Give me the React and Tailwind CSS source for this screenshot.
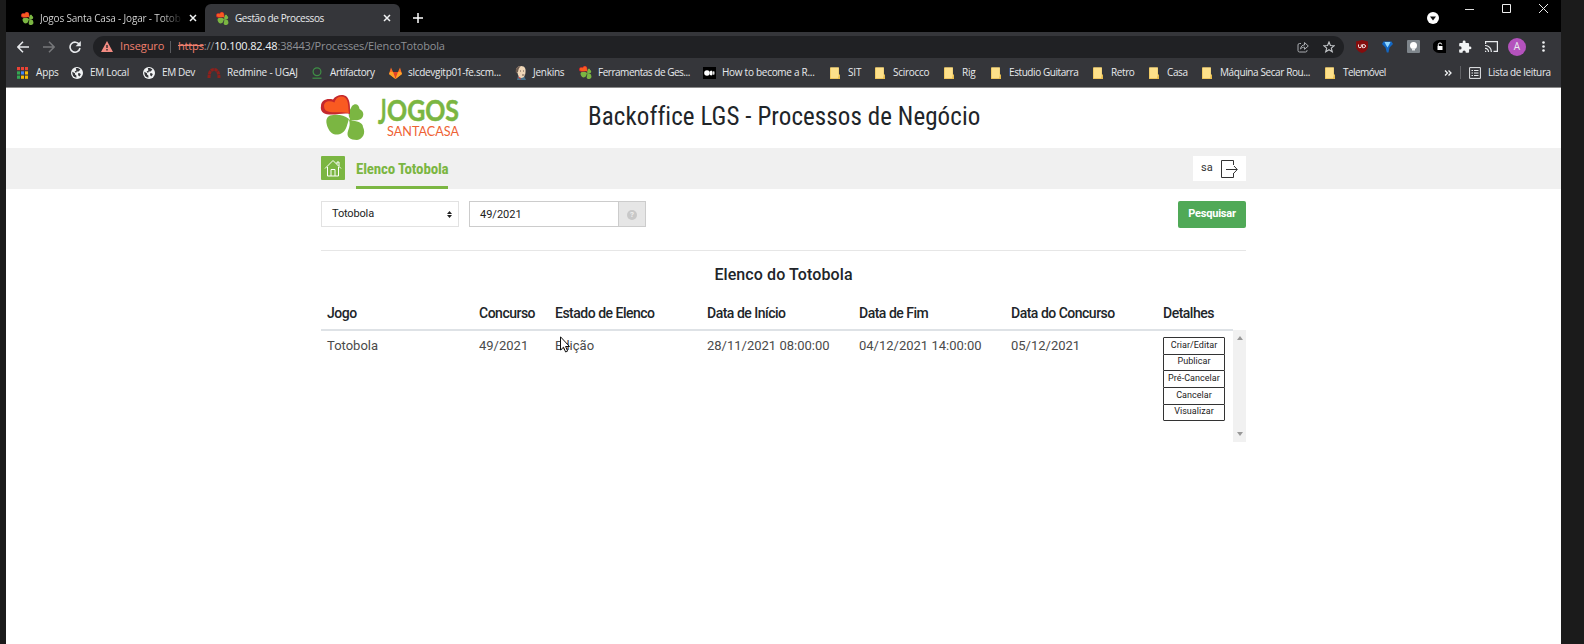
import React from 'react';

const Clover = ({ className }) => (
  <svg viewBox="0 0 45 45" className={className}>
    <path d="M28 24C22 19 15 19 9 20.500C4 23 5 28 7 33C10 40 16 41 21 38C26 35 26 29 28 24Z" fill="#7bb642" />
    <path d="M29 24C26 18 29 15 31 11C34 8 38 9 38.500 14C43 16 43.500 21 40 24C36 26 32 25 30 25.500C35 26 42 27 42 32C45 38 42 44 36 45C29 45 25 42 27 36C29 31 29 28 28 25Z" fill="#7bb642" />
    <path d="M0 11C0 5 6 3 12 4.500C15 0 22 -1.500 26 2C29.500 6 29 13 29 19C23 17.500 16 20 8 19.500C2 19 -1 16 0 11Z" fill="#c4282d" />
    <path d="M3 11C3 6.500 8 5 13.500 7.500C15 2 20.500 0 24.500 3C28 7 27 13 28 18C21 16.500 15 17.500 9 17C5 16.500 3 14.500 3 11Z" fill="#f95a21" />
  </svg>
);

const Globe = () => (
  <svg viewBox="0 0 12 12" className="size-3">
    <circle cx="6" cy="6" r="6" fill="#f1f3f4" />
    <path d="M1.300 4.800L4 6.300V7.600L5.400 8.600V10.800C2.600 10.400 1 8.200 1.300 4.800ZM4.800 1.200C6.800.8 8.400 1.600 9.400 2.600L7.600 4.600H5.800L5 6L3.600 4.600L5.400 3.600ZM7 6.200H9L9.800 7.600L8.300 9.600L7.200 8.200Z" fill="#35363a" />
  </svg>
);

const AppsGrid = () => (
  <svg viewBox="0 0 11 12" className="h-3 w-[11px]">
    {['#ea4335', '#ea4335', '#ea4335', '#34a853', '#4285f4', '#fbbc04', '#34a853', '#fbbc04', '#fbbc04'].map((c, i) => (
      <rect key={i} x={(i % 3) * 4} y={Math.floor(i / 3) * 4.3} width="3" height="3.2" fill={c} />
    ))}
  </svg>
);

const Redmine = () => (
  <svg viewBox="0 0 14 12" className="h-3 w-3.5" fill="none" stroke="#8f201c" strokeWidth="3">
    <path d="M2 11C2 5 4 2.500 7 2.500S12 5 12 11" strokeDasharray="3.200 .6" />
  </svg>
);

const Artifactory = () => (
  <svg viewBox="0 0 12 12" className="size-3" fill="none" stroke="#3f8f46" strokeWidth="1.200">
    <circle cx="6" cy="4.700" r="3.900" />
    <path d="M1.500 11.200H10.500" />
  </svg>
);

const Gitlab = () => (
  <svg viewBox="0 0 13 12" className="h-3 w-[13px]">
    <path d="M6.500 12L0 7L2 0.500L4 5H9L11 .5L13 7Z" fill="#fc6d26" />
    <path d="M6.500 12L4 5H9Z" fill="#e24329" />
    <path d="M6.500 12L0 7L1 5H4ZM6.500 12L13 7L12 5H9Z" fill="#fca326" />
  </svg>
);

const Jenkins = () => (
  <svg viewBox="0 0 12 14" className="h-3.5 w-3">
    <path d="M2 14L3 10H9L11 14Z" fill="#49728b" />
    <path d="M3 11L6 14L5 10Z" fill="#d33833" />
    <path d="M1 5C1 1 4 0 6 0C10 0 11 3 10.500 6C10.500 9 9 12 6.500 12C4 12 3 9 2.500 7Z" fill="#efd6b7" />
    <path d="M1 7C0 3 2 0 6 0C4 1.500 3.500 3 3 6ZM7 8.500H9.500V9.500H7ZM5 4.500H6V5.500H5ZM8 4.500H9V5.500H8Z" fill="#6d5b50" />
  </svg>
);

const Medium = () => (
  <svg viewBox="0 0 13 12" className="h-3 w-[13px]">
    <rect width="13" height="12" fill="#000" />
    <circle cx="4" cy="6" r="2.800" fill="#fff" />
    <ellipse cx="8.200" cy="6" rx="1.500" ry="2.500" fill="#fff" />
    <ellipse cx="10.800" cy="6" rx=".7" ry="2" fill="#fff" />
  </svg>
);

const Folder = () => (
  <svg viewBox="0 0 10 12" className="h-3 w-2.5">
    <path d="M0 .5H8.800V7.500H10V12H0Z" fill="#e8bd4e" />
    <path d="M.6 .5H8.800V8L8 11.200H.6Z" fill="#fde08a" />
  </svg>
);

const bookmarks = [
  ['Apps', AppsGrid, 'w-[54px]', 'gap-2', 'tracking-[-0.15px]'],
  ['EM Local', Globe, 'w-[72px]', 'gap-[7px]', 'tracking-[-0.3px]'],
  ['EM Dev', Globe, 'w-[64px]', 'gap-[7px]', 'tracking-[-0.35px]'],
  ['Redmine - UGAJ', Redmine, 'w-[104px]', 'gap-1.5', 'tracking-[-0.2px]'],
  ['Artifactory', Artifactory, 'w-[78px]', 'gap-[7px]', 'tracking-[-0.38px]'],
  ['slcdevgitp01-fe.scm...', Gitlab, 'w-[126px]', 'gap-1.5', 'tracking-[-0.3px]'],
  ['Jenkins', Jenkins, 'w-[64px]', 'gap-1.5', 'tracking-[-0.25px]'],
  ['Ferramentas de Ges...', () => <Clover className="size-[13px]" />, 'w-[124px]', 'gap-1.5', 'tracking-[-0.48px]'],
  ['How to become a R...', Medium, 'w-[127px]', 'gap-1.5', 'tracking-[-0.28px]'],
  ['SIT', Folder, 'w-[45px]', 'gap-2', 'tracking-[-0.2px]'],
  ['Scirocco', Folder, 'w-[69px]', 'gap-2', 'tracking-[-0.3px]'],
  ['Rig', Folder, 'w-[47px]', 'gap-2', 'tracking-[-0.2px]'],
  ['Estudio Guitarra', Folder, 'w-[102px]', 'gap-2', 'tracking-[-0.42px]'],
  ['Retro', Folder, 'w-[56px]', 'gap-2', 'tracking-[-0.4px]'],
  ['Casa', Folder, 'w-[53px]', 'gap-2', 'tracking-[-0.4px]'],
  ['Máquina Secar Rou...', Folder, 'w-[123px]', 'gap-2', 'tracking-[-0.4px]'],
  ['Telemóvel', Folder, 'w-[119px]', 'gap-2', 'tracking-[-0.55px]'],
];

const Cross = ({ className }) => (
  <svg viewBox="0 0 8 8" className={className} fill="none" stroke="#f1f3f4" strokeWidth="1.500">
    <path d="M1 1L7 7M7 1L1 7" />
  </svg>
);

function TabStrip() {
  return (
    <div className="flex h-8 bg-black text-[10px] text-[#e8eaed]">
      <div className="flex w-[199px] items-center pt-1 pl-[15px]">
        <Clover className="size-[13px]" />
        <div className="ml-1.5 w-[143px] whitespace-nowrap bg-linear-to-r from-[#dddddd] from-85% to-transparent bg-clip-text tracking-[-0.18px] text-transparent">Jogos Santa Casa - Jogar - Totob</div>
        <Cross className="ml-[6px] size-2" />
      </div>
      <div className="mt-1 flex w-[195px] items-center rounded-t-[6px] bg-[#35363a] pl-[11px]">
        <Clover className="size-[13px]" />
        <div className="ml-[6px] w-[143px] whitespace-nowrap tracking-[-0.4px]">Gestão de Processos</div>
        <Cross className="ml-[5px] size-2" />
      </div>
      <svg viewBox="0 0 10 10" className="mt-[13px] ml-[13px] size-2.5" stroke="#fff" strokeWidth="1.500"><path d="M5 0V10M0 5H10" /></svg>
      <div className="grow" />
      <svg viewBox="0 0 12 12" className="mt-3 mr-[26px] size-3"><circle cx="6" cy="6" r="6" fill="#fff" /><path d="M3 4.500H9L6 8.500Z" fill="#111" /></svg>
      <svg viewBox="0 0 9 9" className="mt-[5px] mr-[28px] size-[9px]" stroke="#ddd"><path d="M0 4.500H9" /></svg>
      <svg viewBox="0 0 9 9" className="mt-[4px] mr-[28px] size-[9px]" stroke="#eee" fill="none"><path d="M.5 .5H8.500V8.500H.5Z" /></svg>
      <svg viewBox="0 0 9 9" className="mt-[4px] mr-[13px] size-[9px]" stroke="#eee"><path d="M0 0L9 9M9 0L0 9" /></svg>
    </div>
  );
}

function Toolbar() {
  return (
    <div className="flex h-[26px] items-center pt-[3px] text-[#e8eaed]">
      <svg viewBox="0 0 12 12" className="ml-[11px] h-3 w-3" fill="none" stroke="#e8eaed" strokeWidth="1.500"><path d="M12 6H1M6 .8L.9 6L6 11.200" /></svg>
      <svg viewBox="0 0 12 12" className="ml-[14px] h-3 w-3" fill="none" stroke="#77787b" strokeWidth="1.500"><path d="M0 6H11M6 .8L11.100 6L6 11.200" /></svg>
      <svg viewBox="0 0 12 12" className="ml-[14px] size-3" fill="none" stroke="#e8eaed" strokeWidth="1.600"><path d="M10.300 3.500A5 5 0 1 0 11 7" /><path d="M11.800 0V5.200H6.600Z" fill="#e8eaed" stroke="none" /></svg>
      <div className="ml-[12px] flex h-[22px] w-[1251px] items-center rounded-full bg-[#202124] pl-2 text-[11px]">
        <svg viewBox="0 0 12 11" className="h-[11px] w-3"><path d="M6 0L12 11H0Z" fill="#f28b82" /><path d="M6 4V7M6 8V9.500" stroke="#202124" strokeWidth="1.300" /></svg>
        <span className="ml-[7px] w-[44px] whitespace-nowrap tracking-[-0.1px] text-[#f0806f]">Inseguro</span>
        <span className="ml-1.5 h-3 w-px bg-[#5a5b5f]" />
        <span className="ml-[7px] whitespace-nowrap tracking-[-0.17px] text-[#8d9094]">
          <span className="text-[#f0806f] line-through">https</span>://<span className="text-[#f1f3f4]">10.100.82.48</span>:38443/Processes/ElencoTotobola
        </span>
        <div className="grow" />
        <svg viewBox="0 0 12 12" className="size-3" fill="none" stroke="#aaadb1"><path d="M4 2.500H2.500Q1 2.500 1 4V9.500Q1 11 2.500 11H8.500Q10 11 10 9.500V9" /><path d="M3.500 8C4 5 5.500 4 7.500 4V1.500L11.300 5L7.500 8.300V6.200C6 6.200 4.800 6.500 3.500 8Z" /></svg>
        <svg viewBox="0 0 12 12" className="mr-[9px] ml-[14px] size-3" fill="none" stroke="#c4c7ca" strokeWidth="1.100"><path d="M6 1L7.400 4.500L11.200 4.700L8.300 7.100L9.300 10.800L6 8.700L2.700 10.800L3.700 7.100L.8 4.700L4.600 4.500Z" /></svg>
      </div>
      <svg viewBox="0 0 12 13" className="ml-[12px] h-[13px] w-3"><path d="M6 0L12 1.500V6C12 10 9 12 6 13C3 12 0 10 0 6V1.500Z" fill="#850d0d" /><path d="M2.500 4.500V6.500Q2.500 7.700 3.900 7.700T5.300 6.500V4.500M6.600 4.500V7.700H7.600Q9.600 7.500 9.600 6.100T7.600 4.500Z" stroke="#fff" strokeWidth=".9" fill="none" /></svg>
      <svg viewBox="0 0 11 12" className="ml-[14px] h-3 w-[11px]"><path d="M1.500 .5H9.500L11 3L7.500 6.500L6.500 11.500H4.800L3.500 6.500L0 3Z" fill="#1267c4" /><path d="M2.500 1H8.500L7 4L5.500 6.500L4 4Z" fill="#8fd6ff" /></svg>
      <svg viewBox="0 0 13 13" className="ml-[14px] size-[13px]"><rect width="13" height="13" rx="1" fill="#7e858b" /><circle cx="6.500" cy="5.500" r="3.500" fill="#fff" /><path d="M5 8H8V10.500H5Z" fill="#e6e9eb" /></svg>
      <svg viewBox="0 0 13 13" className="ml-[13px] size-[13px]"><path d="M6 0H13V13H6A6.500 6.500 0 0 1 6 0Z" fill="#000" /><path d="M4.500 6H9.500V10H4.500Z" fill="#fff" /><path d="M5.300 6V4.500Q5.300 3 7 3T8.700 4.500" stroke="#fff" fill="none" /></svg>
      <svg viewBox="0 0 24 24" className="ml-[12px] size-[14px]" fill="#f1f3f4"><path d="M20.500 11H19V7c0-1.100-.9-2-2-2h-4V3.500a2.500 2.500 0 0 0-5 0V5H4c-1.100 0-2 .9-2 2v3.800h1.500a2.700 2.700 0 0 1 0 5.400H2V20c0 1.100.9 2 2 2h3.800v-1.500a2.700 2.700 0 0 1 5.400 0V22H17c1.100 0 2-.9 2-2v-4h1.500a2.500 2.500 0 0 0 0-5z" /></svg>
      <svg viewBox="0 0 13 11" className="ml-[13px] h-[11px] w-[13px]" fill="none" stroke="#e8eaed" strokeWidth="1.200"><path d="M.6 3V.6H12.400V10.400H8.500M0 4.500A6 6 0 0 1 6.300 11M0 7.300A3.400 3.400 0 0 1 3.500 11" /><path d="M0 9.300V11H1.700Z" fill="#e8eaed" stroke="none" /></svg>
      <div className="ml-[10px] flex size-[18px] items-center justify-center rounded-full bg-[#b452bd] text-[10px]">A</div>
      <svg viewBox="0 0 3 11" className="ml-[16px] h-[11px] w-[3px]" fill="#f1f3f4"><circle cx="1.500" cy="1.500" r="1.300" /><circle cx="1.500" cy="5.500" r="1.300" /><circle cx="1.500" cy="9.500" r="1.300" /></svg>
    </div>
  );
}

function BookmarkBar() {
  return (
    <div className="flex h-[30px] items-center border-b border-[#8a8a8a] pl-[11px] text-[10px] text-[#e8eaed]">
      {bookmarks.map(([label, Icon, width, gap, tracking]) => (
        <div key={label} className={`flex shrink-0 items-center whitespace-nowrap ${width} ${gap} ${tracking}`}>
          <Icon />
          <span>{label}</span>
        </div>
      ))}
      <svg viewBox="0 0 8 6" className="h-1.5 w-2 shrink-0" fill="none" stroke="#f1f3f4" strokeWidth="1.300"><path d="M1 .5L3.500 3L1 5.500M4.500 .5L7 3L4.500 5.500" /></svg>
      <span className="ml-[8px] h-[13px] w-px shrink-0 bg-[#5f6064]" />
      <svg viewBox="0 0 12 12" className="ml-[8px] size-3 shrink-0" fill="none" stroke="#e8eaed"><path d="M.6 .6H11.400V11.400H.6ZM2.500 3.500H4M5 3.500H9.500M2.500 6H4M5 6H9.500M2.500 8.500H4M5 8.500H9.500" /></svg>
      <span className="ml-[7px] tracking-[-0.36px] whitespace-nowrap">Lista de leitura</span>
    </div>
  );
}

function Header() {
  return (
    <div className="flex h-[60px] pl-[315px]">
      <Clover className="mt-[7px] size-[45px] overflow-visible" />
      <svg viewBox="0 0 84 45" className="mt-[7px] ml-[11px] h-[45px] w-[84px] overflow-visible">
        <g fontFamily="Lato" fontWeight="bold" fill="#7bb642" stroke="#7bb642" strokeWidth=".5">
          <text x="1" y="29" fontSize="34" textLength="8.500" lengthAdjust="spacingAndGlyphs">J</text>
          <text x="10" y="25.500" fontSize="28" textLength="72" lengthAdjust="spacingAndGlyphs">OGOS</text>
        </g>
        <text x="10" y="40.500" fontFamily="Lato" fontSize="13.500" fill="#ee6234" textLength="72" lengthAdjust="spacingAndGlyphs">SANTACASA</text>
      </svg>
      <h1 className="mt-[11px] ml-[127px] font-['Roboto_Condensed',Roboto,sans-serif] text-[25px] leading-9 font-normal tracking-[0.08px] whitespace-nowrap text-[#212529] font-stretch-condensed">Backoffice LGS - Processos de Negócio</h1>
    </div>
  );
}

function NavBar() {
  return (
    <div className="flex h-[41px] bg-[#f0f0f0] pl-[315px]">
      <div className="mt-2 flex size-6 items-center justify-center rounded-[1px] bg-[#7bb642]">
        <svg viewBox="0 0 18 18" className="size-[18px]" fill="none" stroke="#fff"><path d="M1 9.500L9 1.500L17 9.500M3.500 8V17H14.500V8M7 17V10.500H11V17M13 5V3H15V7" /></svg>
      </div>
      <div className="ml-[11px] h-full w-[92px] border-b-[3px] border-[#7bb642] pt-[10px] font-['Roboto_Condensed',Roboto,sans-serif] text-[15px] font-bold tracking-[-0.15px] whitespace-nowrap text-[#7bb642] font-stretch-condensed">Elenco Totobola</div>
      <div className="mt-2 ml-[745px] flex h-[25px] w-[53px] items-center bg-white pl-2 text-[11px] text-[#333]">
        sa
        <svg viewBox="0 0 17 18" className="ml-2 h-[18px] w-[17px]" fill="none" stroke="#333"><path d="M12.500 5V.5H.5V17.500H12.500V13M5 9.500H16M13 6L16.300 9.500L13 13" /></svg>
      </div>
    </div>
  );
}

const actions = ['Criar/Editar', 'Publicar', 'Pré-Cancelar', 'Cancelar', 'Visualizar'];

function Content() {
  return (
    <div className="ml-[315px] w-[925px]">
      <div className="flex h-[62px] items-start border-b border-[#e6e6e6] pt-3 text-[11px] text-[#222]">
        <div className="flex h-[26px] w-[138px] items-center justify-between border border-[#e2e2e2] pr-1.5 pl-2.5">
          <span className="tracking-[-0.15px]">Totobola</span>
          <svg viewBox="0 0 5 7" className="h-[7px] w-[5px]" fill="#222"><path d="M0 3L2.500 0L5 3ZM0 4L2.500 7L5 4Z" /></svg>
        </div>
        <div className="ml-[10px] flex h-[26px] w-[150px] items-center border border-[#ccc] pt-0.5 pl-2.5">49/2021</div>
        <div className="flex h-[26px] w-[27px] items-center justify-center border border-l-0 border-[#ccc] bg-[#e6e6e6] pt-0.5">
          <div className="flex size-[10px] items-center justify-center rounded-full bg-[#c8c8c8] text-[8px] font-bold text-[#eee]">?</div>
        </div>
        <div className="grow" />
        <div className="flex h-[27px] w-[68px] items-center justify-center rounded-[2px] bg-[#50a957] font-bold tracking-[-0.2px] text-white">Pesquisar</div>
      </div>
      <h2 className="mt-[12px] h-6 text-center text-base leading-6 font-medium tracking-[0.1px] text-[#212529]">Elenco do Totobola</h2>
      <div className="mt-4 w-[912px]">
        <div className="grid h-[28px] grid-cols-12 border-b-2 border-[#dee2e6] text-sm font-medium tracking-[-0.5px] whitespace-nowrap text-[#212529] [&>div]:pl-1.5">
          <div className="col-span-2">Jogo</div>
          <div>Concurso</div>
          <div className="col-span-2">Estado de Elenco</div>
          <div className="col-span-2">Data de Início</div>
          <div className="col-span-2">Data de Fim</div>
          <div className="col-span-2">Data do Concurso</div>
          <div>Detalhes</div>
        </div>
      </div>
      <div className="flex h-[111px]">
        <div className="grid w-[912px] grid-cols-12 pt-[5px] text-[13px] whitespace-nowrap text-[#4a4a4a] [&>div]:pl-1.5">
          <div className="col-span-2">Totobola</div>
          <div>49/2021</div>
          <div className="relative col-span-2">
            Edição
            <svg viewBox="0 0 10 17" className="absolute top-0 left-[11px] h-[17px] w-2.5" fill="#fff" stroke="#111"><path d="M.5 .8V14L3.500 11.200L5.600 16L7.600 15.100L5.600 10.500H9.500Z" /></svg>
          </div>
          <div className="col-span-2">28/11/2021 08:00:00</div>
          <div className="col-span-2">04/12/2021 14:00:00</div>
          <div className="col-span-2">05/12/2021</div>
          <div className="flex flex-col pt-px">
            {actions.map((a) => (
              <div key={a} className="-mb-px flex h-[17.700px] w-[62px] shrink-0 items-center justify-center rounded-[1px] border border-[#333] pb-px text-[9px] tracking-[0.05px] text-[#222]">{a}</div>
            ))}
          </div>
        </div>
        <div className="-mt-px flex h-[112px] w-[13px] flex-col items-center justify-between bg-[#f1f1f1] py-1.5">
          <svg viewBox="0 0 6 4" className="h-1 w-1.5" fill="#999"><path d="M0 4L3 0L6 4Z" /></svg>
          <svg viewBox="0 0 6 4" className="h-1 w-1.5" fill="#999"><path d="M0 0L3 4L6 0Z" /></svg>
        </div>
      </div>
    </div>
  );
}

export default function App() {
  return (
    <div className="flex h-[644px] w-[1584px] overflow-hidden bg-[#1b1b1b] pl-1.5">
      <div className="w-[1555px] bg-white">
        <div className="bg-[#35363a] font-['Open_Sans',sans-serif]">
          <TabStrip />
          <Toolbar />
          <BookmarkBar />
        </div>
        <div className="font-[Roboto,sans-serif]">
          <Header />
          <NavBar />
          <Content />
        </div>
      </div>
    </div>
  );
}
